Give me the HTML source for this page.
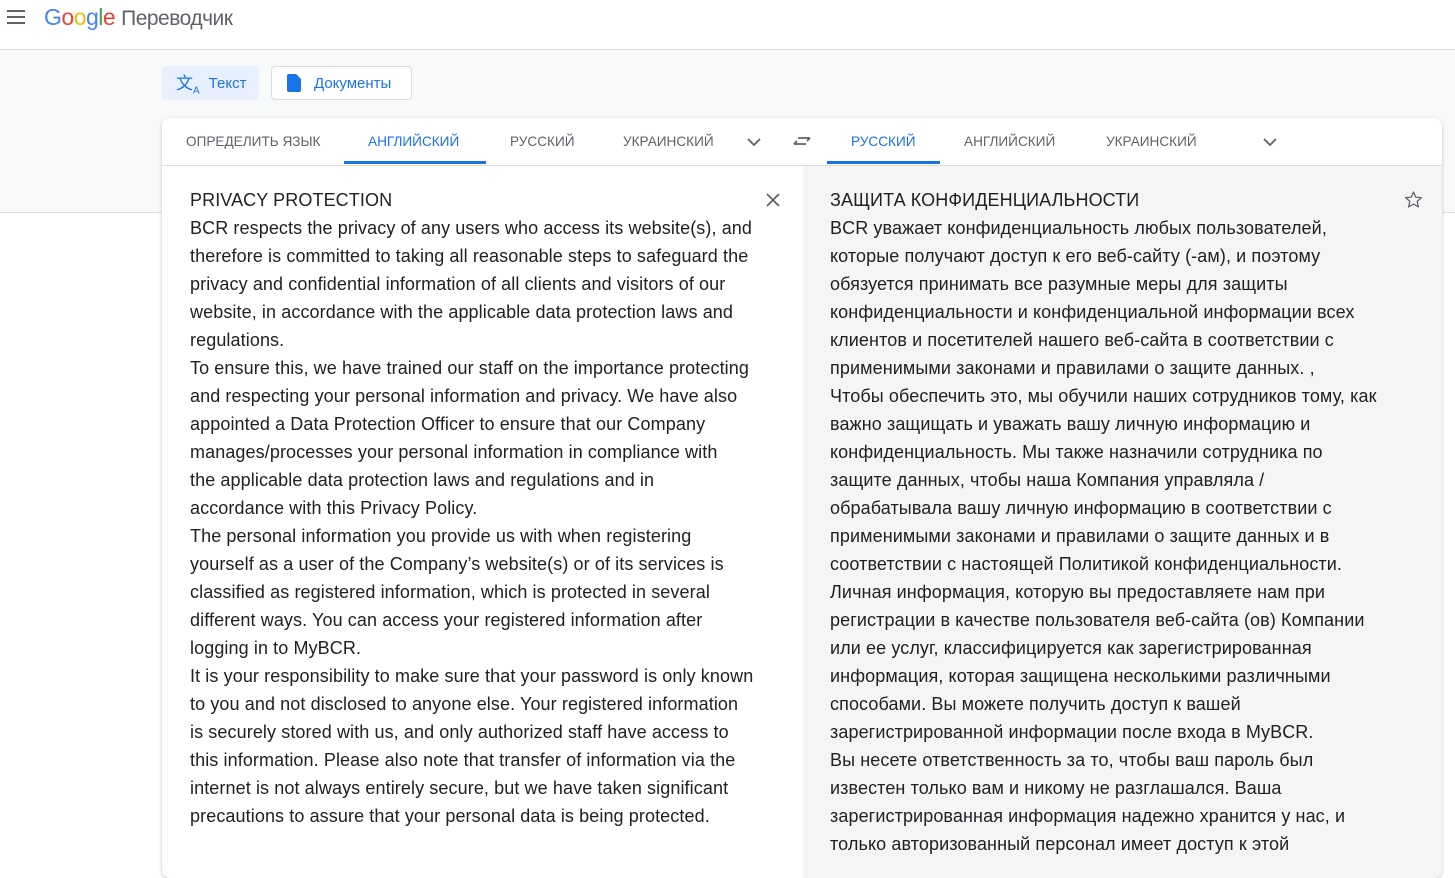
<!DOCTYPE html>
<html><head><meta charset="utf-8"><style>
body{margin:0;width:1455px;height:857px;overflow:hidden;background:#fff;font-family:"Liberation Sans",sans-serif;position:relative}
.hdr{position:absolute;left:0;top:0;width:1455px;height:49px;border-bottom:1px solid #dadce0;background:#fff}
.band{position:absolute;left:0;top:50px;width:1455px;height:162px;background:#f8f9fa;border-bottom:1px solid #dadce0}
.btn{position:absolute;top:66px;height:34px;border-radius:4px;font-size:15px;color:#1a73e8;display:flex;align-items:center;box-sizing:border-box}
.card{position:absolute;left:162px;top:118px;width:1280px;height:760px;background:#fff;border-radius:8px;box-shadow:0 1px 3px rgba(60,64,67,.3);overflow:hidden}
.tabs{position:absolute;left:0;top:0;width:1280px;height:47px;border-bottom:1px solid #dadce0}
.tab{position:absolute;top:16px;font-size:13.6px;color:#5f6368}
.tab.a{color:#1a73e8}
.ul{position:absolute;top:43px;height:3px;background:#1a73e8}
.right{position:absolute;left:641px;top:48px;width:639px;height:720px;background:#f5f5f5}
.txt{position:absolute;font-size:18px;line-height:28px;color:#202124;white-space:pre;letter-spacing:0.1px}
</style></head><body>
<div class="hdr">
<svg style="position:absolute;left:7px;top:10px" width="18" height="14"><rect y="0" width="18" height="2" fill="#5f6368"/><rect y="6" width="18" height="2" fill="#5f6368"/><rect y="12" width="18" height="2" fill="#5f6368"/></svg>
<div style="position:absolute;left:44px;top:4px;font-size:23px;letter-spacing:-0.5px"><span style="color:#4285f4">G</span><span style="color:#ea4335">o</span><span style="color:#fbbc05">o</span><span style="color:#4285f4">g</span><span style="color:#34a853">l</span><span style="color:#ea4335">e</span> <span style="color:#5f6368;font-size:21px">Переводчик</span></div>
</div>
<div class="band"></div>
<div class="btn" style="left:162px;width:97px;background:#e8f0fe;padding-left:14px"><span style="font-size:17px;margin-right:9px">文<sub style="font-size:10px">A</sub></span>Текст</div>
<div class="btn" style="left:271px;width:141px;background:#fff;border:1px solid #dadce0;padding-left:15px"><svg width="14" height="18" style="margin-right:13px"><path d="M2 0h7l5 5v11a2 2 0 0 1-2 2H2a2 2 0 0 1-2-2V2a2 2 0 0 1 2-2z" fill="#1a73e8"/></svg>Документы</div>
<div class="card">
<div class="tabs">
<div class="tab" style="left:24px">ОПРЕДЕЛИТЬ ЯЗЫК</div>
<div class="tab a" style="left:206px">АНГЛИЙСКИЙ</div>
<div class="ul" style="left:182px;width:142px"></div>
<div class="tab" style="left:348px">РУССКИЙ</div>
<div class="tab" style="left:461px">УКРАИНСКИЙ</div>
<svg style="position:absolute;left:585px;top:20px" width="14" height="9"><path d="M1 1l6 6 6-6" stroke="#5f6368" stroke-width="1.8" fill="none"/></svg>
<svg style="position:absolute;left:631px;top:16px" width="18" height="14"><path d="M1 10h12M1 10l3-3M17 4H5M17 4l-3 3" stroke="#5f6368" stroke-width="1.8" fill="none"/></svg>
<div class="tab a" style="left:689px">РУССКИЙ</div>
<div class="ul" style="left:665px;width:113px"></div>
<div class="tab" style="left:802px">АНГЛИЙСКИЙ</div>
<div class="tab" style="left:944px">УКРАИНСКИЙ</div>
<svg style="position:absolute;left:1101px;top:20px" width="14" height="9"><path d="M1 1l6 6 6-6" stroke="#5f6368" stroke-width="1.8" fill="none"/></svg>
</div>
<div class="right"></div>
<svg style="position:absolute;left:604px;top:75px" width="14" height="14"><path d="M1 1l12 12M13 1L1 13" stroke="#5f6368" stroke-width="1.8"/></svg>
<svg style="position:absolute;left:1242px;top:72px" width="19" height="19" viewBox="0 0 24 24"><path d="M12 2.5l2.9 6.6 7.1.6-5.4 4.7 1.6 7-6.2-3.7-6.2 3.7 1.6-7L2 9.7l7.1-.6z" fill="none" stroke="#5f6368" stroke-width="1.6" stroke-linejoin="round"/></svg>
</div>
<div class="txt" style="left:190px;top:186px">PRIVACY PROTECTION
BCR respects the privacy of any users who access its website(s), and
therefore is committed to taking all reasonable steps to safeguard the
privacy and confidential information of all clients and visitors of our
website, in accordance with the applicable data protection laws and
regulations.
To ensure this, we have trained our staff on the importance protecting
and respecting your personal information and privacy. We have also
appointed a Data Protection Officer to ensure that our Company
manages/processes your personal information in compliance with
the applicable data protection laws and regulations and in
accordance with this Privacy Policy.
The personal information you provide us with when registering
yourself as a user of the Company’s website(s) or of its services is
classified as registered information, which is protected in several
different ways. You can access your registered information after
logging in to MyBCR.
It is your responsibility to make sure that your password is only known
to you and not disclosed to anyone else. Your registered information
is securely stored with us, and only authorized staff have access to
this information. Please also note that transfer of information via the
internet is not always entirely secure, but we have taken significant
precautions to assure that your personal data is being protected.</div>
<div class="txt" style="left:830px;top:186px">ЗАЩИТА КОНФИДЕНЦИАЛЬНОСТИ
BCR уважает конфиденциальность любых пользователей,
которые получают доступ к его веб-сайту (-ам), и поэтому
обязуется принимать все разумные меры для защиты
конфиденциальности и конфиденциальной информации всех
клиентов и посетителей нашего веб-сайта в соответствии с
применимыми законами и правилами о защите данных. ,
Чтобы обеспечить это, мы обучили наших сотрудников тому, как
важно защищать и уважать вашу личную информацию и
конфиденциальность. Мы также назначили сотрудника по
защите данных, чтобы наша Компания управляла /
обрабатывала вашу личную информацию в соответствии с
применимыми законами и правилами о защите данных и в
соответствии с настоящей Политикой конфиденциальности.
Личная информация, которую вы предоставляете нам при
регистрации в качестве пользователя веб-сайта (ов) Компании
или ее услуг, классифицируется как зарегистрированная
информация, которая защищена несколькими различными
способами. Вы можете получить доступ к вашей
зарегистрированной информации после входа в MyBCR.
Вы несете ответственность за то, чтобы ваш пароль был
известен только вам и никому не разглашался. Ваша
зарегистрированная информация надежно хранится у нас, и
только авторизованный персонал имеет доступ к этой</div>
</body></html>
